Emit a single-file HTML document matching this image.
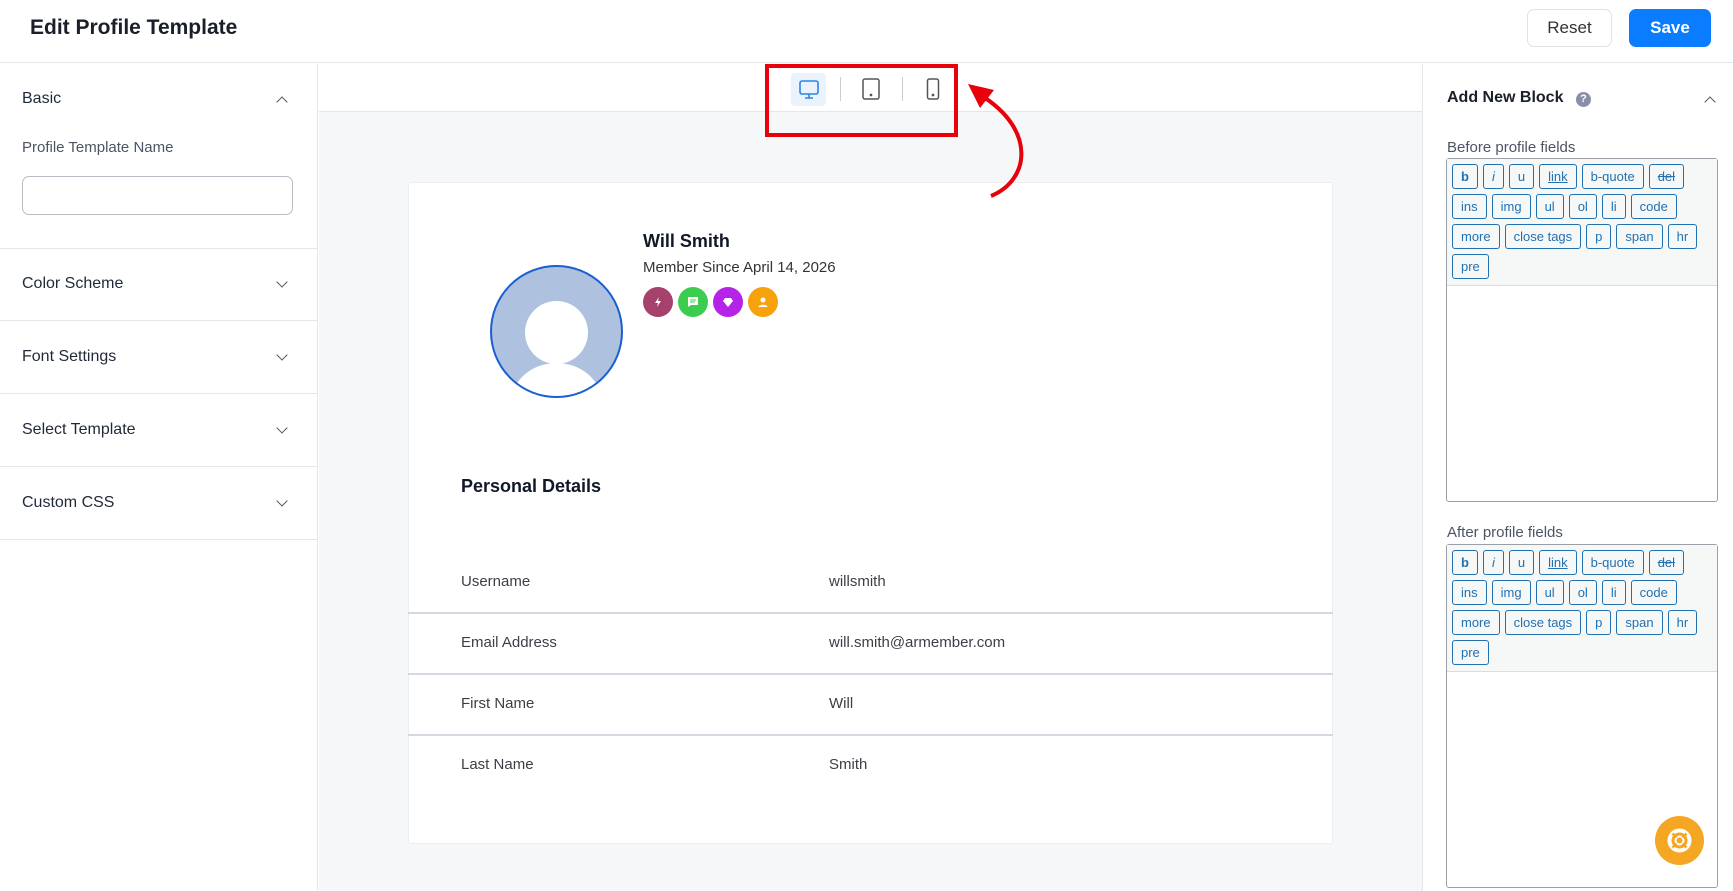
<!DOCTYPE html>
<html><head><meta charset="utf-8"><style>
*{box-sizing:border-box;margin:0;padding:0}
body{width:1733px;height:891px;overflow:hidden;background:#fff;font-family:"Liberation Sans",sans-serif;color:#1f2937;position:relative}
.a{position:absolute}
.hdr{left:0;top:0;width:1733px;height:63px;border-bottom:1px solid #e3e6ea}
.title{left:30px;top:16px;font-size:21px;font-weight:600;color:#1a1f29}
.btn{top:9px;height:38px;border-radius:7px;font-size:17px;display:flex;align-items:center;justify-content:center}
.left{left:0;top:64px;width:318px;height:827px;border-right:1px solid #e3e6ea}
.sec{left:22px;font-size:16px;color:#1f2937;font-weight:500}
.sep{left:0;width:318px;height:1px;background:#e3e6ea}
.chev{left:278px;width:8px;height:8px;border-right:1.5px solid #555;border-bottom:1.5px solid #555}
.center{left:319px;top:64px;width:1103px;height:827px;background:#f5f7f9}
.tb{left:319px;top:64px;width:1103px;height:48px;background:#fff;border-bottom:1px solid #e3e6ea}
.card{left:408px;top:182px;width:925px;height:662px;background:#fff;border:1px solid #eceef1;border-radius:3px}
.lbl{font-size:15px;color:#3b3f46}
.line{left:408px;width:925px;height:2px;background:#d4d8e0}
.ed{left:1446px;width:272px;height:344px;border:1px solid #9aa0a6;border-radius:3px;background:#fff}
.qt{background:#f6f7f7;border-bottom:1px solid #dcdcde;padding:5px;display:flex;flex-wrap:wrap;gap:5px 5px;height:127px;align-content:flex-start}
.qt span{height:25px;border:1px solid #2271b1;color:#2271b1;border-radius:3px;font-size:13px;padding:0 8px;display:flex;align-items:center}
.badge{top:287px;width:30px;height:30px;border-radius:50%;display:flex;align-items:center;justify-content:center}
</style></head><body>
<div class="a hdr"></div>
<div class="a title">Edit Profile Template</div>
<div class="a btn" style="left:1527px;width:85px;border:1px solid #dfe2e6;color:#333">Reset</div>
<div class="a btn" style="left:1629px;width:82px;background:#0a7cff;color:#fff;font-weight:700">Save</div>

<div class="a left"></div>
<div class="a sec" style="top:90px">Basic</div>
<div class="a chev" style="top:98px;transform:rotate(225deg)"></div>
<div class="a" style="left:22px;top:139px;font-size:15px;color:#4b5563">Profile Template Name</div>
<div class="a" style="left:22px;top:176px;width:271px;height:39px;border:1px solid #b8bdc4;border-radius:7px"></div>
<div class="a sep" style="top:248px"></div>
<div class="a sec" style="top:275px">Color Scheme</div><div class="a chev" style="top:278px;transform:rotate(45deg)"></div>
<div class="a sep" style="top:320px"></div>
<div class="a sec" style="top:348px">Font Settings</div><div class="a chev" style="top:351px;transform:rotate(45deg)"></div>
<div class="a sep" style="top:393px"></div>
<div class="a sec" style="top:421px">Select Template</div><div class="a chev" style="top:424px;transform:rotate(45deg)"></div>
<div class="a sep" style="top:466px"></div>
<div class="a sec" style="top:494px">Custom CSS</div><div class="a chev" style="top:497px;transform:rotate(45deg)"></div>
<div class="a sep" style="top:539px"></div>

<div class="a center"></div>
<div class="a tb"></div>
<div class="a" style="left:791px;top:73px;width:35px;height:33px;background:#eaf3fd;border-radius:4px"></div>
<svg class="a" style="left:798px;top:78px" width="22" height="22" viewBox="0 0 22 22" fill="none" stroke="#2a86e6" stroke-width="1.6"><rect x="2" y="3" width="18" height="13" rx="2"/><path d="M11 16v4M7 20h8"/></svg>
<div class="a" style="left:840px;top:77px;width:1px;height:24px;background:#ccc"></div>
<svg class="a" style="left:861px;top:77px" width="20" height="24" viewBox="0 0 20 24" fill="none" stroke="#555" stroke-width="1.5"><rect x="2" y="2" width="16" height="20" rx="2"/><circle cx="10" cy="18" r=".6" fill="#555"/></svg>
<div class="a" style="left:902px;top:77px;width:1px;height:24px;background:#ccc"></div>
<svg class="a" style="left:926px;top:77px" width="14" height="24" viewBox="0 0 14 24" fill="none" stroke="#555" stroke-width="1.5"><rect x="1.5" y="2" width="11" height="20" rx="2"/><circle cx="7" cy="18" r=".6" fill="#555"/></svg>
<div class="a" style="left:765px;top:64px;width:193px;height:73px;border:4px solid #e8000b"></div>

<div class="a card"></div>
<svg class="a" style="left:960px;top:70px" width="80" height="140" viewBox="0 0 80 140"><path d="M31 126 C70 110 76 60 22 26" fill="none" stroke="#e8000b" stroke-width="4"/><path d="M8 14 L34 20 L20 38 Z" fill="#e8000b"/></svg>
<div class="a" style="left:490px;top:265px;width:133px;height:133px;border-radius:50%;background:#aec1df;border:2px solid #1a5fd0;overflow:hidden">
<div class="a" style="left:33px;top:34px;width:63px;height:63px;border-radius:50%;background:#fff"></div>
<div class="a" style="left:19px;top:96px;width:91px;height:80px;border-radius:50%;background:#fff"></div></div>
<div class="a" style="left:643px;top:231px;font-size:18px;font-weight:700;color:#111827">Will Smith</div>
<div class="a" style="left:643px;top:259px;font-size:15px;color:#333">Member Since April 14, 2026</div>
<div class="a badge" style="left:643px;background:#a5416c"><svg width="12" height="12" viewBox="0 0 12 12"><path d="M7 1L3 7h3l-1 4 4-6H6z" fill="#fff"/></svg></div>
<div class="a badge" style="left:678px;background:#3ccc4f"><svg width="12" height="12" viewBox="0 0 12 12"><path d="M1 1h10v8H4l-3 2z" fill="#fff"/><path d="M3 4h6M3 6h5" stroke="#3ccc4f"/></svg></div>
<div class="a badge" style="left:713px;background:#b522e8"><svg width="12" height="12" viewBox="0 0 12 12"><path d="M3 2h6l2 3-5 6-5-6z" fill="#fff"/></svg></div>
<div class="a badge" style="left:748px;background:#f7a20c"><svg width="12" height="12" viewBox="0 0 12 12"><circle cx="6" cy="4" r="2.5" fill="#fff"/><path d="M1.5 11c0-3 9-3 9 0z" fill="#fff"/></svg></div>
<div class="a" style="left:461px;top:476px;font-size:18px;font-weight:700;color:#111827">Personal Details</div>
<div class="a lbl" style="left:461px;top:573px">Username</div><div class="a lbl" style="left:829px;top:573px">willsmith</div>
<div class="a line" style="top:612px"></div>
<div class="a lbl" style="left:461px;top:634px">Email Address</div><div class="a lbl" style="left:829px;top:634px">will.smith@armember.com</div>
<div class="a line" style="top:673px"></div>
<div class="a lbl" style="left:461px;top:695px">First Name</div><div class="a lbl" style="left:829px;top:695px">Will</div>
<div class="a line" style="top:734px"></div>
<div class="a lbl" style="left:461px;top:756px">Last Name</div><div class="a lbl" style="left:829px;top:756px">Smith</div>

<div class="a" style="left:1422px;top:64px;width:1px;height:827px;background:#e3e6ea"></div>
<div class="a" style="left:1447px;top:89px;font-size:16px;font-weight:600;color:#1a1f29">Add New Block</div>
<div class="a" style="left:1576px;top:92px;width:15px;height:15px;border-radius:50%;background:#8a8fa8;color:#fff;font-size:11px;font-weight:700;text-align:center;line-height:15px">?</div>
<div class="a chev" style="left:1706px;top:98px;transform:rotate(225deg)"></div>
<div class="a" style="left:1447px;top:139px;font-size:15px;color:#4b5563">Before profile fields</div>
<div class="a ed" style="top:158px"><div class="qt"><span style="font-weight:700">b</span><span style="font-style:italic">i</span><span>u</span><span style="text-decoration:underline">link</span><span>b-quote</span><span style="text-decoration:line-through">del</span><span>ins</span><span>img</span><span>ul</span><span>ol</span><span>li</span><span>code</span><span>more</span><span>close tags</span><span>p</span><span>span</span><span>hr</span><span>pre</span></div></div>
<div class="a" style="left:1447px;top:524px;font-size:15px;color:#4b5563">After profile fields</div>
<div class="a ed" style="top:544px"><div class="qt"><span style="font-weight:700">b</span><span style="font-style:italic">i</span><span>u</span><span style="text-decoration:underline">link</span><span>b-quote</span><span style="text-decoration:line-through">del</span><span>ins</span><span>img</span><span>ul</span><span>ol</span><span>li</span><span>code</span><span>more</span><span>close tags</span><span>p</span><span>span</span><span>hr</span><span>pre</span></div></div>
<div class="a" style="left:1655px;top:816px;width:49px;height:49px;border-radius:50%;background:#f5a623"></div>
<svg class="a" style="left:1665px;top:826px" width="29" height="29" viewBox="0 0 29 29" fill="none" stroke="#fff"><circle cx="14.5" cy="14.5" r="10" stroke-width="4"/><circle cx="14.5" cy="14.5" r="4" stroke-width="2"/><path d="M7.5 7.5l4 4M21.5 7.5l-4 4M7.5 21.5l4-4M21.5 21.5l-4-4" stroke="#f5a623" stroke-width="2.5"/></svg>
</body></html>
